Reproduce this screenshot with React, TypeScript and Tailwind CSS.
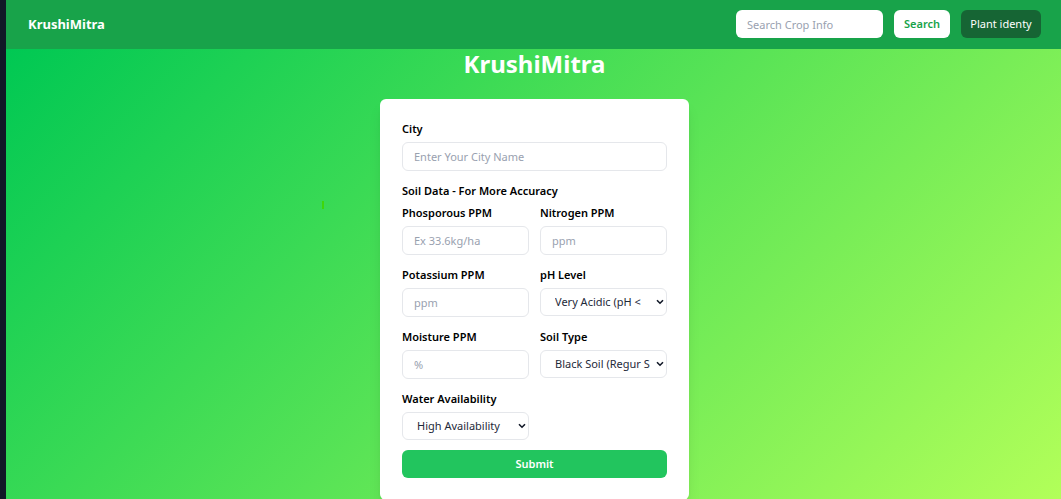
import { useId } from "react";
import type { InputHTMLAttributes } from "react";

const controlBox =
  "w-full min-w-0 rounded-md border border-gray-200 bg-white text-[11px] leading-4 outline-none";

function TextField({ label, ...rest }: { label: string } & InputHTMLAttributes<HTMLInputElement>) {
  const id = useId();
  return (
    <div className="flex min-w-0 flex-col gap-[5px]">
      <label htmlFor={id} className="text-[11px] leading-4 font-semibold text-black">
        {label}
      </label>
      <input
        id={id}
        type="text"
        className={`${controlBox} h-[29px] px-[11px] text-gray-900 placeholder:text-gray-400`}
        {...rest}
      />
    </div>
  );
}

function SelectField({ label, options }: { label: string; options: string[] }) {
  const id = useId();
  return (
    <div className="flex min-w-0 flex-col gap-[5px]">
      <label htmlFor={id} className="text-[11px] leading-4 font-semibold text-black">
        {label}
      </label>
      <div className="relative">
        <select
          id={id}
          className={`${controlBox} h-[28px] appearance-none pr-[15px] pl-[14px] text-gray-800`}
        >
          {options.map((option) => (
            <option key={option}>{option}</option>
          ))}
        </select>
        <svg
          aria-hidden="true"
          viewBox="0 0 8 6"
          className="pointer-events-none absolute top-[11px] right-[3px] h-[6px] w-[8px]"
          fill="none"
          stroke="#111827"
          strokeWidth="1.6"
        >
          <path d="M1 1.2 4 4.2 7 1.2" />
        </svg>
      </div>
    </div>
  );
}

export default function App() {
  return (
    <div className="flex h-screen flex-col overflow-hidden border-l-6 border-[#111827] font-['Noto_Sans','Open_Sans',sans-serif]">
      <header className="flex shrink-0 items-center justify-between bg-[#18a34a] pt-[10px] pr-5 pb-[11px] pl-[22px]">
        <a href="#" className="text-[13px] leading-5 font-bold text-white">
          KrushiMitra
        </a>
        <form className="flex items-center gap-[11px]" onSubmit={(e) => e.preventDefault()}>
          <input
            type="text"
            aria-label="Search Crop Info"
            placeholder="Search Crop Info"
            className="h-7 w-[147px] rounded-md bg-white px-[11px] text-[11px] leading-4 text-gray-900 outline-none placeholder:text-gray-400"
          />
          <button
            type="submit"
            className="h-7 w-14 rounded-md bg-white text-[11px] leading-4 font-semibold text-[#18a34a]"
          >
            Search
          </button>
          <button
            type="button"
            className="h-7 w-20 rounded-md bg-[#166534] text-[11px] leading-4 text-white"
          >
            Plant identy
          </button>
        </form>
      </header>

      <main className="relative flex grow flex-col items-center bg-[linear-gradient(135deg,#00c853,#b2ff59)] pl-0.5">
        <span className="absolute top-[152px] left-[316px] h-2 w-0.5 bg-[#3fd60a]" />
        <h1 className="text-[24px] leading-[30px] font-bold text-white">KrushiMitra</h1>
        <form
          className="mt-5 flex w-[309px] flex-col rounded-md bg-white p-[22px] shadow-lg"
          onSubmit={(e) => e.preventDefault()}
        >
          <TextField label="City" placeholder="Enter Your City Name" />
          <h2 className="mt-3 text-[11px] leading-4 font-semibold text-black">
            Soil Data - For More Accuracy
          </h2>
          <div className="mt-[6px] grid grid-cols-2 gap-x-[11px] gap-y-3">
            <TextField label="Phosporous PPM" placeholder="Ex 33.6kg/ha" />
            <TextField label="Nitrogen PPM" placeholder="ppm" />
            <TextField label="Potassium PPM" placeholder="ppm" />
            <SelectField
              label="pH Level"
              options={["Very Acidic (pH <", "Acidic", "Neutral", "Alkaline"]}
            />
            <TextField label="Moisture PPM" placeholder="%" />
            <SelectField
              label="Soil Type"
              options={["Black Soil (Regur S", "Red Soil", "Alluvial Soil"]}
            />
            <SelectField
              label="Water Availability"
              options={["High Availability", "Medium Availability", "Low Availability"]}
            />
          </div>
          <button
            type="submit"
            className="mt-[10px] h-7 rounded-md bg-[#22c55e] text-[11px] leading-4 font-semibold text-white"
          >
            Submit
          </button>
        </form>
      </main>
    </div>
  );
}
